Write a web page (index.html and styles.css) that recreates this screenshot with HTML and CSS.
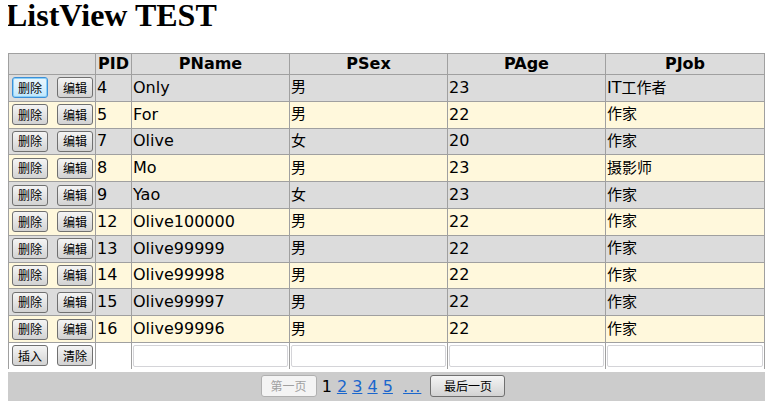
FILE: index.html
```html
<!DOCTYPE html>
<html lang="zh">
<head>
  <meta charset="UTF-8" />
  <title>ListView TEST</title>
  <link rel="stylesheet" href="styles.css">
</head>
<body>

  <h1>ListView TEST</h1>

  <!-- ListView layout -->
  <div class="lv">
    <table class="list">
      <colgroup>
        <col class="w-act"><col class="w-id"><col class="w-col"><col class="w-col"><col class="w-col"><col class="w-job">
      </colgroup>
      <tr class="head">
        <th></th>
        <th>PID</th>
        <th>PName</th>
        <th>PSex</th>
        <th>PAge</th>
        <th>PJob</th>
      </tr>
      <tr class="item">
        <td><div class="acts"><button class="btn focus">删除</button><button class="btn">编辑</button></div></td>
        <td>4</td><td>Only</td><td class="cjk">男</td><td>23</td><td>IT<span class="cjk">工作者</span></td>
      </tr>
      <tr class="alt">
        <td><div class="acts"><button class="btn">删除</button><button class="btn">编辑</button></div></td>
        <td>5</td><td>For</td><td class="cjk">男</td><td>22</td><td class="cjk">作家</td>
      </tr>
      <tr class="item">
        <td><div class="acts"><button class="btn">删除</button><button class="btn">编辑</button></div></td>
        <td>7</td><td>Olive</td><td class="cjk">女</td><td>20</td><td class="cjk">作家</td>
      </tr>
      <tr class="alt">
        <td><div class="acts"><button class="btn">删除</button><button class="btn">编辑</button></div></td>
        <td>8</td><td>Mo</td><td class="cjk">男</td><td>23</td><td class="cjk">摄影师</td>
      </tr>
      <tr class="item">
        <td><div class="acts"><button class="btn">删除</button><button class="btn">编辑</button></div></td>
        <td>9</td><td>Yao</td><td class="cjk">女</td><td>23</td><td class="cjk">作家</td>
      </tr>
      <tr class="alt">
        <td><div class="acts"><button class="btn">删除</button><button class="btn">编辑</button></div></td>
        <td>12</td><td>Olive100000</td><td class="cjk">男</td><td>22</td><td class="cjk">作家</td>
      </tr>
      <tr class="item">
        <td><div class="acts"><button class="btn">删除</button><button class="btn">编辑</button></div></td>
        <td>13</td><td>Olive99999</td><td class="cjk">男</td><td>22</td><td class="cjk">作家</td>
      </tr>
      <tr class="alt">
        <td><div class="acts"><button class="btn">删除</button><button class="btn">编辑</button></div></td>
        <td>14</td><td>Olive99998</td><td class="cjk">男</td><td>22</td><td class="cjk">作家</td>
      </tr>
      <tr class="item">
        <td><div class="acts"><button class="btn">删除</button><button class="btn">编辑</button></div></td>
        <td>15</td><td>Olive99997</td><td class="cjk">男</td><td>22</td><td class="cjk">作家</td>
      </tr>
      <tr class="alt">
        <td><div class="acts"><button class="btn">删除</button><button class="btn">编辑</button></div></td>
        <td>16</td><td>Olive99996</td><td class="cjk">男</td><td>22</td><td class="cjk">作家</td>
      </tr>
      <!-- insert template -->
      <tr class="ins">
        <td><div class="acts"><button class="btn">插入</button><button class="btn">清除</button></div></td>
        <td></td>
        <td><input class="box" type="text"></td>
        <td><input class="box" type="text"></td>
        <td><input class="box" type="text"></td>
        <td><input class="box" type="text"></td>
      </tr>
    </table>

    <!-- pager -->
    <div class="pager">
      <button class="btn pbtn" disabled>第一页</button>
      <span class="pages">1 <a href="#">2</a> <a href="#">3</a> <a href="#">4</a> <a href="#">5</a>&nbsp;&nbsp;<a href="#" class="more">...</a></span>
      <button class="btn pbtn last">最后一页</button>
    </div>
  </div>

</body>
</html>
```

FILE: styles.css
```css
/* page */
html, body {
  overflow: hidden;
}

body {
  margin: 0 0 0 8px;
  font-family: "Liberation Serif", serif;
}

h1 {
  margin: -1px 0 22px -2px;
  font-size: 32px;
  line-height: 32px;
}

.cjk {
  font-family: "Noto Sans CJK SC", sans-serif;
}

/* ListView table */
.lv {
  width: 757px;
}

.list {
  width: 757px;
  table-layout: fixed;
  border-collapse: collapse;
  background-color: #ffffff;
  font-family: "DejaVu Sans", Verdana, sans-serif;
  font-size: 16px;
  line-height: 18px;
  color: #000;
}

.w-act { width: 87px; }
.w-id { width: 36px; }
.w-col { width: 158px; }
.w-job { width: 159px; }

.list th,
.list td {
  border: 1px solid #a0a0a0;
  padding: 0 1px;
  overflow: hidden;
  white-space: nowrap;
}

.list th {
  height: 20px;
  background-color: #dcdcdc;
  font-size: 16px;
  text-align: center;
}

.list td {
  height: 25.8px;
  text-align: left;
}

.list .cjk {
  font-size: 15px;
  line-height: 17px;
}

/* lift the CJK cells to sit level with the latin text */
.list td.cjk {
  height: 21.8px;
  padding-bottom: 4px;
}

.list .item { background-color: #dcdcdc; }
.list .alt { background-color: #fff8dc; }
.list .ins td {
  background-color: #ffffff;
  height: 26px;
  border-bottom: none;
}

.acts {
  display: flex;
  gap: 9px;
  padding-left: 2px;
}

/* buttons */
.btn {
  width: 36px;
  height: 21px;
  padding: 0;
  font-family: "Noto Sans CJK SC", sans-serif;
  font-size: 12px;
  line-height: 14px;
  color: #000;
  border: 1px solid #707070;
  border-radius: 3px;
  background: linear-gradient(#f4f4f4, #e4e4e4 50%, #d2d2d2);
}

.btn.focus {
  border-color: #3c8fd8;
  background: linear-gradient(#eaf6fd, #d9f0fc 50%, #bee6fd);
  box-shadow: inset 0 0 0 1px #8cd0f5;
}

.box {
  box-sizing: border-box;
  display: block;
  width: 100%;
  height: 22px;
  margin: 1px 0 0;
  border: 1px solid #d4d4d8;
  border-radius: 2px;
  background: #fff;
}

/* pager */
.pager {
  margin: 3px 0 0 -1px;
  width: 758px;
  height: 29px;
  padding: 3px 6px 0 0;
  box-sizing: border-box;
  background-color: #cccccc;
  text-align: center;
  font-family: "DejaVu Sans", Verdana, sans-serif;
  font-size: 16px;
}

.pbtn {
  width: 56px;
  height: 22px;
  vertical-align: top;
}

.pbtn.last {
  width: 75px;
}

.pbtn:disabled {
  color: #a0a0a0;
  border-color: #b0b0b0;
  background: #f4f4f4;
}

.pages {
  display: inline-block;
  margin: 0 4px 0 0;
  line-height: 24px;
  vertical-align: top;
}

.pages a {
  color: #1a66cc;
}

.pages .more {
  letter-spacing: 1px;
}
```
